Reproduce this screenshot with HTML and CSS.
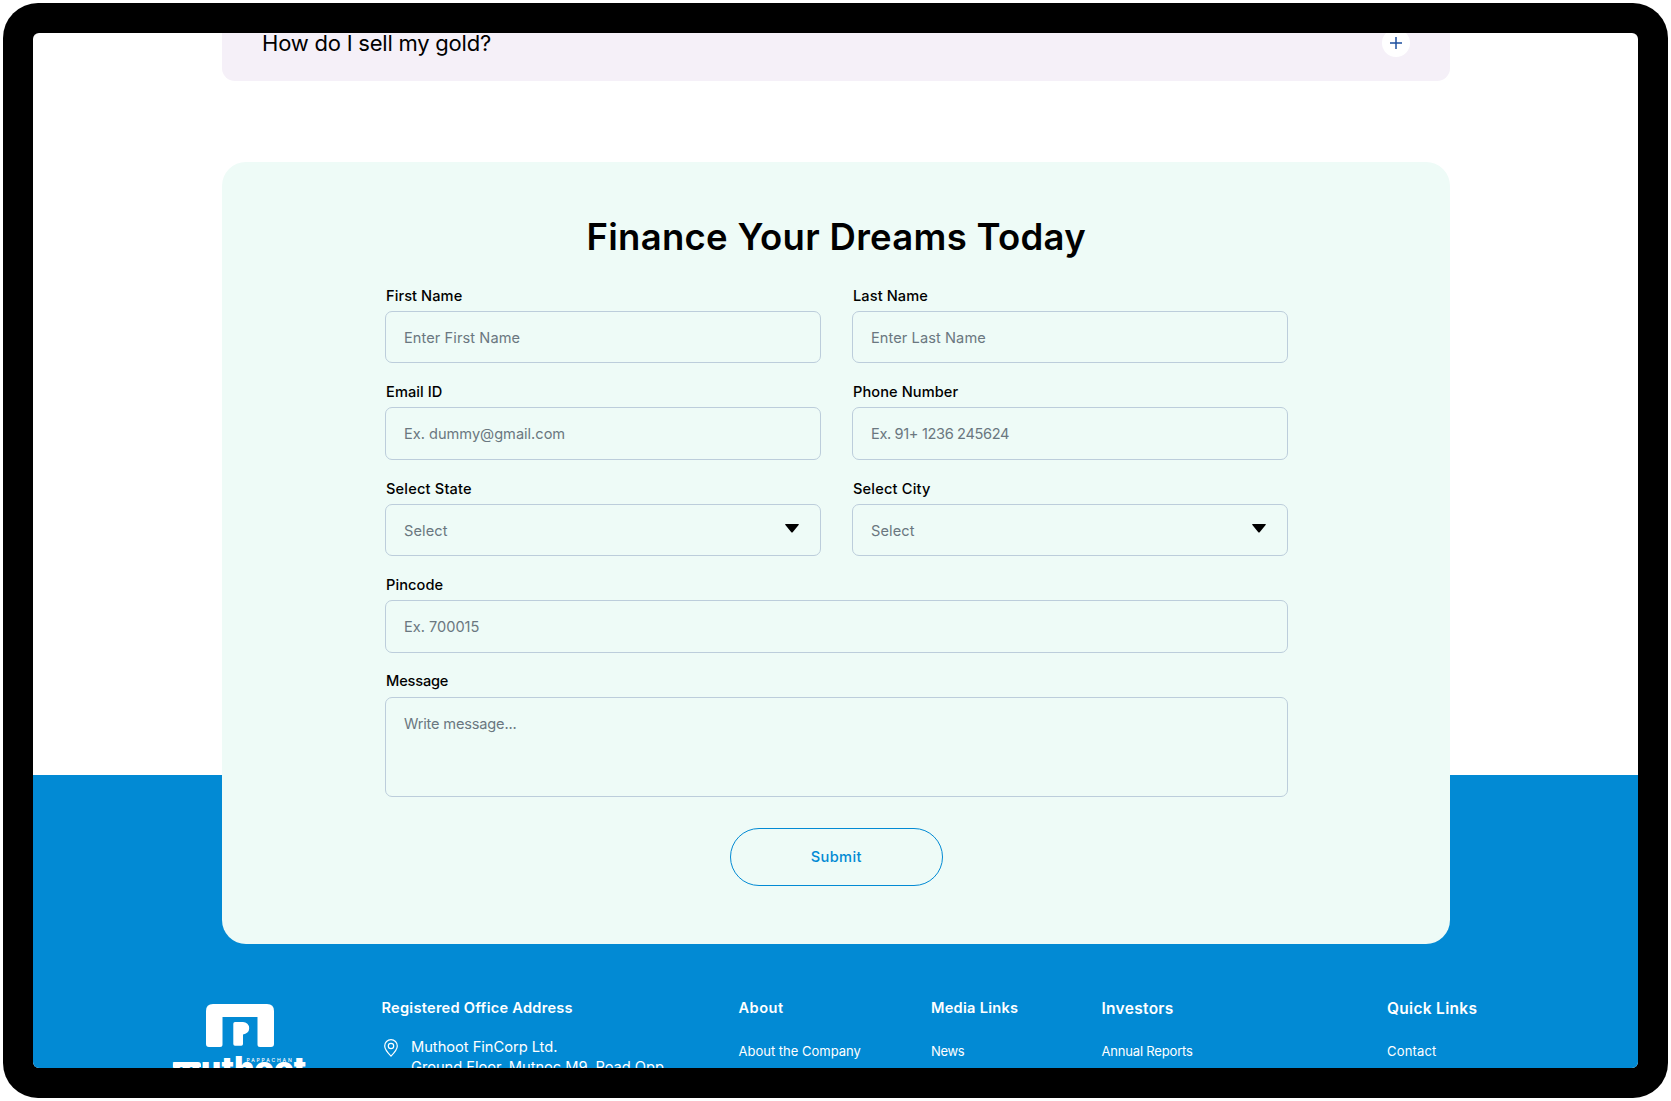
FILE: index.html
```html
<!DOCTYPE html>
<html lang="en">
<head>
<meta charset="utf-8">
<title>Finance Your Dreams Today</title>
<link rel="stylesheet" href="styles.css">
</head>
<body>
<div class="device">
<div class="screen">
  <section class="faq">
    <h3 class="faq-question">How do I sell my gold?</h3>
    <span class="faq-toggle"><svg width="12" height="12" viewBox="0 0 12 12"><path d="M6 0v12M0 6h12" stroke="#1d4f9f" stroke-width="1.5"/></svg></span>
  </section>
  <section class="contact">
    <form class="card">
      <h1 class="card-title">Finance Your Dreams Today</h1>
      <div class="fields">
        <div class="field"><label class="label">First Name</label><div class="input"><span class="hint">Enter First Name</span></div></div>
        <div class="field"><label class="label">Last Name</label><div class="input"><span class="hint">Enter Last Name</span></div></div>
        <div class="field"><label class="label">Email ID</label><div class="input"><span class="hint snug">Ex. dummy@gmail.com</span></div></div>
        <div class="field"><label class="label">Phone Number</label><div class="input"><span class="hint tightest">Ex. 91+ 1236 245624</span></div></div>
        <div class="field"><label class="label loose">Select State</label><div class="input"><span class="hint">Select</span><svg class="caret" width="14" height="9" viewBox="0 0 14 9"><path d="M0.6 0h12.8q.8.3.2 1L7.7 8.2q-.7.6-1.4 0L.4 1q-.6-.7.2-1z"/></svg></div></div>
        <div class="field"><label class="label loose">Select City</label><div class="input"><span class="hint">Select</span><svg class="caret" width="14" height="9" viewBox="0 0 14 9"><path d="M0.6 0h12.8q.8.3.2 1L7.7 8.2q-.7.6-1.4 0L.4 1q-.6-.7.2-1z"/></svg></div></div>
        <div class="field wide"><label class="label">Pincode</label><div class="input"><span class="hint snug">Ex. 700015</span></div></div>
        <div class="field wide"><label class="label tight">Message</label><div class="input message"><span class="hint tight">Write message...</span></div></div>
      </div>
      <button class="submit" type="button">Submit</button>
    </form>
  </section>
  <footer class="footer">
    <div class="brand">
      <svg class="brand-mark" width="68" height="43" viewBox="0 0 68 43" fill="#fff"><path d="M7 0h54q7 0 7 7v33q0 3-3 3H54q-2.500 0-2.500-2.500V13h-35v27.500q0 2.500-2.500 2.500H3q-3 0-3-3V7q0-7 7-7z"/><path d="M29 18h8a6.200 6.200 0 0 1 0 12.400V40q0 1.700-1.700 1.700H29q-1.700 0-1.700-1.700V19.700q0-1.700 1.700-1.700z"/></svg>
      <div class="brand-name">muthoot<small class="brand-over">PAPPACHAN</small></div>
    </div>
    <div class="col">
      <h4 class="col-title">Registered Office Address</h4>
      <div class="address">
        <svg class="pin" width="14" height="18" viewBox="0 0 14 18" fill="none" stroke="#fff" stroke-width="1.200"><path d="M7 17.200C4.500 14.600.7 10.600.7 7a6.300 6.300 0 0 1 12.600 0c0 3.600-3.800 7.600-6.300 10.200z"/><circle cx="7" cy="7" r="2.700"/></svg>
        <div>Muthoot FinCorp Ltd.<br>Ground Floor, Mutnoc M9, Road Opp</div>
      </div>
    </div>
    <div class="col"><h4 class="col-title looser">About</h4><a class="link">About the Company</a></div>
    <div class="col"><h4 class="col-title">Media Links</h4><a class="link tightest">News</a></div>
    <div class="col"><h4 class="col-title large">Investors</h4><a class="link tight">Annual Reports</a></div>
    <div class="col"><h4 class="col-title large">Quick Links</h4><a class="link loose">Contact</a></div>
  </footer>
</div>
</div>
</body>
</html>
```
FILE: styles.css
```css
* { box-sizing: border-box; }

body {
  margin: 0;
  padding: 3px;
  height: 1101px;
  overflow: hidden;
  background: #fff;
  font-family: Inter, "Liberation Sans", sans-serif;
  color: #000;
}

h1, h3, h4 { margin: 0; }
svg { display: block; flex: none; }

.device {
  width: 1665px;
  height: 1095px;
  padding: 30px;
  background: #000;
  border-radius: 35px;
}

.screen {
  height: 1035px;
  overflow: hidden;
  border-radius: 6px;
  background: #fff;
}

.faq {
  display: flex;
  align-items: center;
  justify-content: space-between;
  width: 1228px;
  height: 76px;
  margin: -28px 0 0 189px;
  padding: 0 40px;
  border-radius: 0 0 13px 13px;
  background: #f5f0f8;
}

.faq-question {
  font-size: 22px;
  font-weight: 400;
  line-height: 30px;
  letter-spacing: -0.22px;
  white-space: nowrap;
}

.faq-toggle {
  display: grid;
  place-items: center;
  width: 28px;
  height: 28px;
  border-radius: 50%;
  background: #fff;
}

.contact {
  height: 863px;
  padding: 80.500px 0 0 189px;
  background: linear-gradient(#fff 694px, #028ad4 694px);
}

.card {
  width: 1228px;
  height: 782.500px;
  padding: 51px 162.500px 0 163px;
  border-radius: 24px;
  background: #eefbf7;
}

.card-title {
  font-size: 36.500px;
  font-weight: 600;
  line-height: 48px;
  letter-spacing: 0.28px;
  text-align: center;
  white-space: nowrap;
}

.fields {
  display: grid;
  grid-template-columns: 1fr 1fr;
  column-gap: 31.500px;
  row-gap: 18.700px;
  margin-top: 25.300px;
}

.field { display: grid; gap: 5.300px; }
.wide { grid-column: span 2; }

.label {
  justify-self: start;
  margin-left: 1px;
  font-size: 14.600px;
  font-weight: 500;
  line-height: 20px;
  letter-spacing: 0.08px;
  white-space: nowrap;
}

.input {
  display: flex;
  align-items: center;
  justify-content: space-between;
  height: 52.400px;
  padding: 1px 21px 0 18px;
  border: 1px solid #bccddb;
  border-radius: 7px;
}

.message {
  height: 100.500px;
  align-items: flex-start;
  padding-top: 16.500px;
}

.hint {
  color: #6a7780;
  font-size: 14.600px;
  line-height: 20px;
  letter-spacing: 0.08px;
  white-space: nowrap;
}

.caret { margin-top: -4px; }

.submit {
  display: block;
  width: 213px;
  height: 58px;
  margin: 31px auto 0;
  padding: 0;
  border: 1px solid #028ad4;
  border-radius: 29px;
  background: none;
  color: #028ad4;
  font: 450 14.600px/20px Inter, "Liberation Sans", sans-serif;
  letter-spacing: 0.4px;
}

.footer {
  display: grid;
  grid-template-columns: 210px 357px 192.500px 170.500px 285.500px 1fr;
  height: 124px;
  padding: 53.500px 0 0 138.500px;
  background: #028ad4;
  color: #fff;
}

.brand-mark { margin: 6.500px 0 0 34.500px; }

.brand-name {
  position: relative;
  margin-top: 1px;
  font-size: 31px;
  font-weight: 900;
  line-height: 40px;
  letter-spacing: 0.26px;
  white-space: nowrap;
}

/* flat roof over the first letter of the wordmark */
.brand-name::before {
  content: "";
  position: absolute;
  left: 1px;
  top: 14px;
  width: 28px;
  height: 5px;
  border-radius: 3px 3px 0 0;
  background: #fff;
}

.brand-over {
  position: absolute;
  left: 75px;
  top: 8px;
  font-size: 5px;
  font-weight: 500;
  line-height: 8px;
  letter-spacing: 1.84px;
}

.col-title {
  font-size: 14.600px;
  font-weight: 600;
  line-height: 20px;
  letter-spacing: 0.26px;
  white-space: nowrap;
}

.large {
  font-size: 15.500px;
  line-height: 21px;
  letter-spacing: 0.3px;
  margin-bottom: -1px;
}

.address {
  display: flex;
  gap: 13.500px;
  margin: 20.500px 0 0 2px;
  font-size: 14.700px;
  line-height: 19.500px;
  letter-spacing: -0.04px;
  white-space: nowrap;
}

.pin { margin-top: 1px; }

.link {
  display: block;
  margin-top: 23.500px;
  font-size: 13px;
  line-height: 20px;
  white-space: nowrap;
}

/* tracking adjustments */
.tightest { letter-spacing: -0.36px; }
.tight { letter-spacing: -0.18px; }
.snug { letter-spacing: -0.01px; }
.loose { letter-spacing: 0.18px; }
.looser { letter-spacing: 0.46px; }
```
